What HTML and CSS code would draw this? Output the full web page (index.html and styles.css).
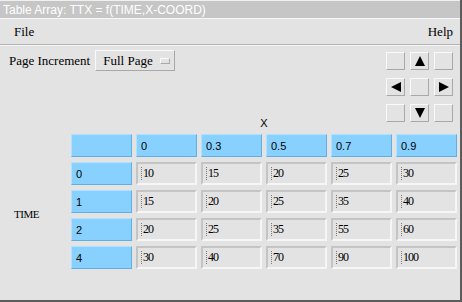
FILE: index.html
```html
<html>
    <head>
        <meta charset="utf-8" />
        <title>Table Array</title>
        <link rel="stylesheet" href="styles.css">
    </head>
    <body>
        <div class="window">
            <div class="titlebar">Table Array: TTX = f(TIME,X-COORD)</div>
            <div class="menubar">
                <span>File</span>
                <span>Help</span>
            </div>
            <div class="content">
                <div class="top">
                    <div class="pager">
                        <span class="label">Page Increment</span>
                        <span class="option">Full Page<i class="ind"></i></span>
                    </div>
                    <div class="arrows">
                        <span class="abtn"></span>
                        <span class="abtn"><svg width="10" height="10"><polygon points="5,0 10,10 0,10" /></svg></span>
                        <span class="abtn"></span>
                        <span class="abtn"><svg width="10" height="10"><polygon points="0,5 10,0 10,10" /></svg></span>
                        <span class="abtn"></span>
                        <span class="abtn"><svg width="10" height="10"><polygon points="10,5 0,0 0,10" /></svg></span>
                        <span class="abtn"></span>
                        <span class="abtn"><svg width="10" height="10"><polygon points="0,0 10,0 5,10" /></svg></span>
                        <span class="abtn"></span>
                    </div>
                </div>
                <div class="tablearea">
                    <div class="axis-x">X</div>
                    <div class="axis-t">TIME</div>
                    <div class="grid">
                        <span class="hd"></span>
                        <span class="hd">0</span>
                        <span class="hd">0.3</span>
                        <span class="hd">0.5</span>
                        <span class="hd">0.7</span>
                        <span class="hd">0.9</span>

                        <span class="hd">0</span>
                        <span class="cell"><i class="cur"></i>10</span>
                        <span class="cell"><i class="cur"></i>15</span>
                        <span class="cell"><i class="cur"></i>20</span>
                        <span class="cell"><i class="cur"></i>25</span>
                        <span class="cell"><i class="cur"></i>30</span>

                        <span class="hd">1</span>
                        <span class="cell"><i class="cur"></i>15</span>
                        <span class="cell"><i class="cur"></i>20</span>
                        <span class="cell"><i class="cur"></i>25</span>
                        <span class="cell"><i class="cur"></i>35</span>
                        <span class="cell"><i class="cur"></i>40</span>

                        <span class="hd">2</span>
                        <span class="cell"><i class="cur"></i>20</span>
                        <span class="cell"><i class="cur"></i>25</span>
                        <span class="cell"><i class="cur"></i>35</span>
                        <span class="cell"><i class="cur"></i>55</span>
                        <span class="cell"><i class="cur"></i>60</span>

                        <span class="hd">4</span>
                        <span class="cell"><i class="cur"></i>30</span>
                        <span class="cell"><i class="cur"></i>40</span>
                        <span class="cell"><i class="cur"></i>70</span>
                        <span class="cell"><i class="cur"></i>90</span>
                        <span class="cell"><i class="cur"></i>100</span>
                    </div>
                </div>
            </div>
        </div>
    </body>
</html>
```

FILE: styles.css
```css
body {
    margin: 0;
    background: #e3e3e3;
}
.window {
    width: 462px;
    height: 302px;
    box-sizing: border-box;
    border-right: 2px solid #5c5c5c;
    border-bottom: 2px solid #5c5c5c;
    background: #e3e3e3;
    font-family: "Liberation Serif", serif;
    font-size: 13px;
    color: #000;
}
.titlebar {
    height: 18px;
    line-height: 18px;
    padding-left: 3px;
    background: #c6c6c6;
    border-top: 1px solid #f0f0f0;
    box-sizing: border-box;
    color: #fff;
    font-family: "Liberation Sans", sans-serif;
    font-size: 12px;
}
.menubar {
    height: 27px;
    box-sizing: border-box;
    display: flex;
    justify-content: space-between;
    align-items: center;
    padding: 0 7px 0 14px;
    border-top: 1px solid #f6f6f6;
    border-bottom: 1px solid #b4b4b4;
    box-shadow: 0 1px 0 #f4f4f4;
}
.content {
    padding: 5px 7px 0 0;
}
.top {
    display: flex;
    justify-content: space-between;
    align-items: flex-start;
}
.pager {
    display: flex;
    align-items: center;
    padding-left: 9px;
}
.label {
    margin-right: 5px;
}
.option {
    display: flex;
    align-items: center;
    height: 21px;
    width: 80px;
    box-sizing: border-box;
    padding-left: 7px;
    border: 1px solid;
    border-color: #fafafa #a8a8a8 #a8a8a8 #fafafa;
}
.ind {
    width: 8px;
    height: 4px;
    margin-left: 7px;
    border: 1px solid;
    border-color: #fafafa #a8a8a8 #a8a8a8 #fafafa;
}
.arrows {
    display: grid;
    grid-template-columns: repeat(3, 19px);
    grid-template-rows: repeat(3, 18px);
    column-gap: 5px;
    row-gap: 8px;
    margin-top: 2px;
    margin-bottom: -7px;
}
.abtn {
    display: flex;
    align-items: center;
    justify-content: center;
    box-sizing: border-box;
    border: 1px solid;
    border-color: #fafafa #a8a8a8 #a8a8a8 #fafafa;
}
.abtn svg {
    fill: #000;
}
.tablearea {
    display: grid;
    grid-template-columns: 71px auto;
}
.axis-x {
    grid-column: 2;
    text-align: center;
    font-family: "Liberation Sans", sans-serif;
    font-size: 11px;
    height: 16px;
    line-height: 16px;
    margin-bottom: 3px;
}
.axis-t {
    grid-column: 1;
    grid-row: 2;
    align-self: center;
    padding: 24px 0 0 14px;
    font-size: 11px;
    letter-spacing: -0.5px;
}
.grid {
    grid-column: 2;
    grid-row: 2;
    display: grid;
    grid-template-columns: repeat(6, 61px);
    grid-auto-rows: 23px;
    column-gap: 4px;
    row-gap: 5px;
}
.hd {
    display: flex;
    align-items: center;
    box-sizing: border-box;
    padding-left: 4px;
    background: #88d0fd;
    border: 1px solid;
    border-color: #b0e2ff #62aee0 #62aee0 #b0e2ff;
    font-family: "Liberation Sans", sans-serif;
    font-size: 11px;
}
.cell {
    display: flex;
    align-items: center;
    box-sizing: border-box;
    padding-left: 3px;
    border: 2px solid;
    border-color: #c4c4c4 #f6f6f6 #f6f6f6 #c4c4c4;
    font-size: 12px;
    letter-spacing: -1px;
}
.cur {
    width: 2px;
    height: 13px;
    margin-right: 0;
    border-left: 1px dotted #7a7a7a;
    box-sizing: border-box;
}
```
